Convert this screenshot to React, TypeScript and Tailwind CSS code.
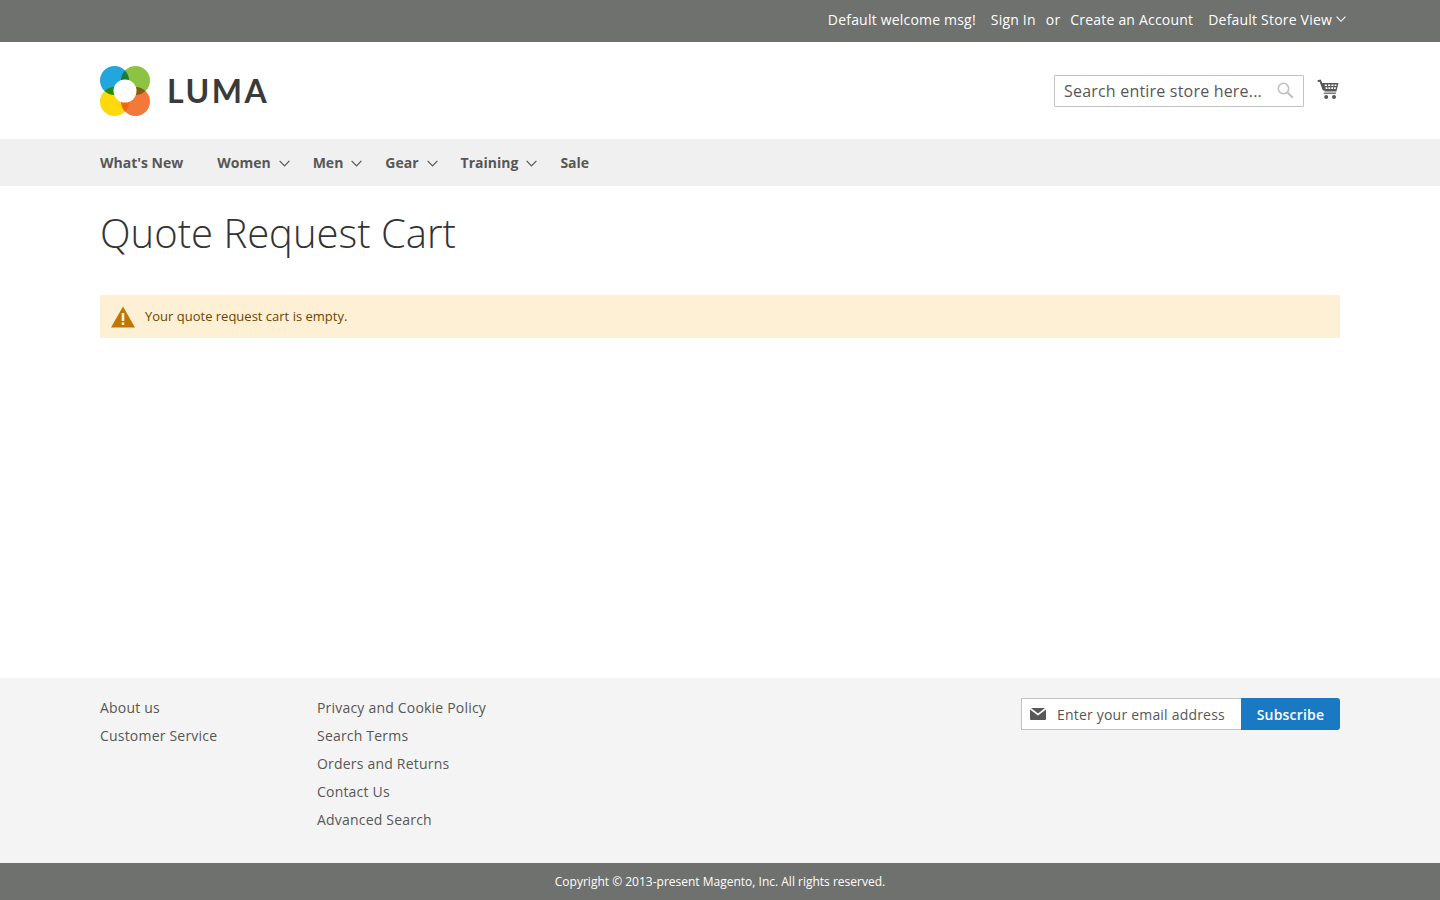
import React from "react"

const navItems = [
  { label: "What's New", hasMenu: false },
  { label: "Women", hasMenu: true },
  { label: "Men", hasMenu: true },
  { label: "Gear", hasMenu: true },
  { label: "Training", hasMenu: true },
  { label: "Sale", hasMenu: false },
]

const footerLeft = ["About us", "Customer Service"]
const footerRight = ["Privacy and Cookie Policy", "Search Terms", "Orders and Returns", "Contact Us", "Advanced Search"]

function LogoMark() {
  return (
    <svg width="50" height="50" viewBox="0 0 50 50" className="block isolate">
      <circle cx="14.5" cy="14.5" r="14.5" fill="#23a5de" className="mix-blend-multiply" />
      <circle cx="35.5" cy="14.5" r="14.5" fill="#8cc342" className="mix-blend-multiply" />
      <circle cx="14.5" cy="35.5" r="14.5" fill="#fdd90d" className="mix-blend-multiply" />
      <circle cx="35.5" cy="35.5" r="14.5" fill="#f3793a" className="mix-blend-multiply" />
      <circle cx="25" cy="25" r="11.5" fill="#ffffff" />
    </svg>
  )
}

function Chevron({ size = 11, color = "#575757" }: { size?: number; color?: string }) {
  return (
    <svg width={size} height={size * 0.64} viewBox="0 0 11 7" fill="none" className="block">
      <path d="M0.6 0.8 L5.5 5.8 L10.4 0.8" stroke={color} strokeWidth="1.2" />
    </svg>
  )
}

function CartIcon() {
  return (
    <svg width="22" height="21" viewBox="0 0 22 21" className="block" fill="#575757">
      <path d="M0.5 1.2 L3.6 0.4 L4.6 2.6 L8 10 L6.6 11.8 L5.6 11 L2.6 2.8 L0.9 3.1 Z" />
      <path d="M5 4 H21.5 L19.4 12.6 H7.6 Z M7.6 5.4 L8 7 H10 L9.8 5.4 Z M11 5.4 L11.1 7 H13.2 L13.2 5.4 Z M14.4 5.4 L14.3 7 H16.4 L16.7 5.4 Z M17.7 5.4 L17.4 7 H19.3 L19.7 5.4 Z M8.4 8.2 L8.8 10 L10.5 10 L10.3 8.2 Z M11.3 8.2 L11.5 10 H13.2 V8.2 Z M14.2 8.2 V10 H16 L16.2 8.2 Z M17.2 8.2 L17 10 H18.6 L19 8.2 Z" fillRule="evenodd" />
      <path d="M6.8 13.6 H19 V14.8 H6.8 Z" />
      <circle cx="9.2" cy="18" r="2" />
      <circle cx="17" cy="18" r="2" />
    </svg>
  )
}

function App() {
  return (
    <div className="min-h-screen flex flex-col bg-white font-['Open_Sans',sans-serif] text-[#333333]">
      <div className="h-[42px] bg-[#6e716e] text-white text-[14px] tracking-[0.2px]">
        <div className="h-full flex items-center justify-end pr-[94px] pb-[3px]">
          <span>Default welcome msg!</span>
          <span className="ml-[15px]">Sign In</span>
          <span className="ml-[10px]">or</span>
          <span className="ml-[10px]">Create an Account</span>
          <span className="ml-[15px]">Default Store View</span>
          <span className="ml-1"><Chevron size={10} color="#ffffff" /></span>
        </div>
      </div>

      <header className="h-[97px] px-[100px] flex items-center justify-between">
        <div className="flex items-center">
          <LogoMark />
          <span className="ml-[17px] font-['Lato',sans-serif] text-[32px] leading-none font-bold tracking-[2.5px] text-[#3a3a3a]">LUMA</span>
        </div>
        <div className="flex items-center">
          <div className="w-[250px] h-[32px] border border-[#c2c2c2] rounded-[1px] flex items-center justify-between pl-[9px] pr-[9px]">
            <span className="text-[16px] text-[#575757] tracking-[0.2px]">Search entire store here...</span>
            <svg width="17" height="17" viewBox="0 0 17 17" fill="none" className="block">
              <circle cx="6.5" cy="6.5" r="5.2" stroke="#c2c2c2" strokeWidth="1.6" />
              <path d="M10.5 10.5 L15.8 15.8" stroke="#c2c2c2" strokeWidth="2.2" />
            </svg>
          </div>
          <div className="ml-[13px] mr-[1px] mb-[3px]"><CartIcon /></div>
        </div>
      </header>

      <nav className="h-[47px] bg-[#f0f0f0] px-[100px] flex items-center text-[14px] font-bold text-[#575757]">
        {navItems.map((item, i) => (
          <div key={i} className={item.label === "What's New" ? "flex items-center mr-[34px]" : "flex items-center mr-[23px]"}>
            <span>{item.label}</span>
            {item.hasMenu && <span className="ml-2 mt-[3px]"><Chevron /></span>}
          </div>
        ))}
      </nav>

      <main className="flex-1 px-[100px]">
        <h1 className="mt-[20px] text-[40px] leading-[54px] font-light text-[#333333]">Quote Request Cart</h1>
        <div className="mt-[35px] h-[43px] bg-[#fdf0d5] flex items-center pl-[11px] text-[13px] text-[#6f4400]">
          <svg width="24" height="22" viewBox="0 0 24 22" className="block">
            <path d="M12 0.5 L24 21.5 H0 Z" fill="#c07600" />
            <rect x="10.7" y="7" width="2.6" height="8" fill="#fdf0d5" />
            <rect x="10.7" y="16.4" width="2.6" height="2.6" fill="#fdf0d5" />
          </svg>
          <span className="ml-[10px]">Your quote request cart is empty.</span>
        </div>
      </main>

      <footer className="h-[185px] bg-[#f4f4f4] px-[100px] pt-[20px] flex justify-between">
        <div className="flex text-[14px] text-[#575757] tracking-[0.2px]">
          <ul className="w-[217px] flex flex-col gap-2">
            {footerLeft.map((link) => (
              <li key={link} className="leading-5">{link}</li>
            ))}
          </ul>
          <ul className="flex flex-col gap-2">
            {footerRight.map((link) => (
              <li key={link} className="leading-5">{link}</li>
            ))}
          </ul>
        </div>
        <div className="flex h-[32px]">
          <div className="w-[220px] bg-white border border-[#c2c2c2] border-r-0 rounded-l-[1px] flex items-center pl-[8px]">
            <svg width="16" height="12" viewBox="0 0 16 12" className="block" fill="#575757">
              <path d="M1 0 H15 L8 5.6 Z" />
              <path d="M0 1.6 L8 7.6 L16 1.6 V10.8 Q16 12 15 12 H1 Q0 12 0 10.8 Z" />
            </svg>
            <span className="ml-[11px] text-[14px] text-[#575757] tracking-[0.2px]">Enter your email address</span>
          </div>
          <div className="w-[99px] bg-[#1979c3] rounded-r-[3px] flex items-center justify-center text-white text-[14px] font-semibold tracking-[0.2px]">Subscribe</div>
        </div>
      </footer>

      <div className="h-[37px] bg-[#6e716e] flex items-center justify-center text-white text-[12px]">
        Copyright © 2013-present Magento, Inc. All rights reserved.
      </div>
    </div>
  )
}

export default App
